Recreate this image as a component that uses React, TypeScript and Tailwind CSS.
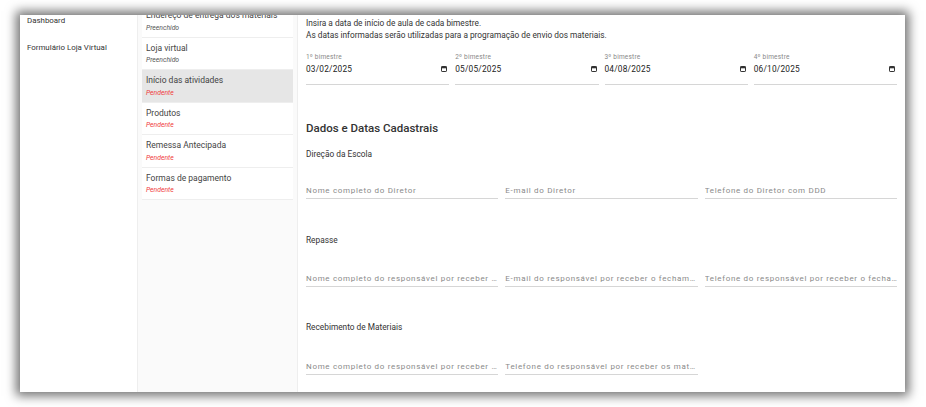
import React from "react";

const font = { fontFamily: "Roboto, 'Liberation Sans', sans-serif" };

function Cal() {
  return (
    <svg width="6" height="6" viewBox="0 0 6 6" className="shrink-0">
      <rect x="0.5" y="0.5" width="5" height="5" rx="0.6" fill="none" stroke="#333" strokeWidth="1" />
      <rect x="0.5" y="0.5" width="5" height="1.8" fill="#333" />
    </svg>
  );
}

const items = [
  { t: "Endereço de entrega dos materiais", s: "Preenchido" },
  { t: "Loja virtual", s: "Preenchido" },
  { t: "Início das atividades", s: "Pendente", sel: true },
  { t: "Produtos", s: "Pendente" },
  { t: "Remessa Antecipada", s: "Pendente" },
  { t: "Formas de pagamento", s: "Pendente" },
];

const dates = [
  ["1º bimestre", "03/02/2025"],
  ["2º bimestre", "05/05/2025"],
  ["3º bimestre", "04/08/2025"],
  ["4º bimestre", "06/10/2025"],
];

function Field({ p }: { p: string }) {
  return (
    <div className="border-b-[1.5px] border-[#d6d6d6] pb-[1px] min-w-0">
      <div className="text-[8px] leading-[12px] tracking-[0.68px] text-[#8a8a8a] truncate">{p}</div>
    </div>
  );
}

export default function App() {
  return (
    <div className="w-[926px] h-[407px] bg-white overflow-hidden pt-[15px] pl-[20px]" style={font}>
      <div className="w-[885px] h-[377px] bg-white flex overflow-hidden shadow-[0_0_10px_4px_rgba(0,0,0,0.55)]">
        {/* nav */}
        <div className="w-[117px] shrink-0 pl-[7px] text-[7.9px] leading-[12px] text-[#333]">
          <div>Dashboard</div>
          <div className="mt-[14.5px]">Formulário Loja Virtual</div>
        </div>
        {/* list */}
        <div className="w-[161px] shrink-0 bg-[#fafafa] border-l border-[#eeeeee] border-r px-[4px]">
          <div className="-mt-[10px] flex flex-col">
            {items.map((it) => (
              <div
                key={it.t}
                className={`h-[32.5px] border-b border-[#eeeeee] pl-[4px] pt-[4px] ${it.sel ? "bg-[#e6e6e6]" : "bg-white"}`}
              >
                <div className="text-[8.5px] leading-[12px] text-[#444] truncate">{it.t}</div>
                <div
                  className={`text-[6.8px] leading-[8px] italic mt-[2.5px] ${it.s === "Pendente" ? "text-[#f03c3c]" : "text-[#555]"}`}
                >
                  {it.s}
                </div>
              </div>
            ))}
          </div>
        </div>
        {/* main */}
        <div className="flex-1 min-w-0 pt-[2px] pl-[8px] pr-[8px] text-[#333]">
          <p className="text-[8.3px] leading-[12px]">
            Insira a data de início de aula de cada bimestre.
            <br />
            As datas informadas serão utilizadas para a programação de envio dos materiais.
          </p>
          <div className="mt-[11px] grid grid-cols-4 gap-x-[6px]">
            {dates.map(([l, v]) => (
              <div key={l} className="border-b-[1.5px] border-[#d6d6d6] pb-[9px]">
                <div className="text-[6.5px] leading-[10px] text-[#888] tracking-[0.2px]">{l}</div>
                <div className="mt-[1px] flex items-center justify-between pr-[2px]">
                  <span className="text-[8.3px] leading-[12px] text-[#222] tracking-[0.2px]">{v}</span>
                  <Cal />
                </div>
              </div>
            ))}
          </div>
          <div className="mt-[35px] text-[11.5px] leading-[16px] font-medium text-[#333]">Dados e Datas Cadastrais</div>
          <div className="mt-[12px] text-[8.3px] leading-[12px]">Direção da Escola</div>
          <div className="mt-[25px] grid grid-cols-3 gap-x-[7px]">
            <Field p="Nome completo do Diretor" />
            <Field p="E-mail do Diretor" />
            <Field p="Telefone do Diretor com DDD" />
          </div>
          <div className="mt-[35px] text-[8.3px] leading-[12px]">Repasse</div>
          <div className="mt-[27px] grid grid-cols-3 gap-x-[7px]">
            <Field p="Nome completo do responsável por receber o fechamento" />
            <Field p="E-mail do responsável por receber o fechamento" />
            <Field p="Telefone do responsável por receber o fechamento" />
          </div>
          <div className="mt-[34px] text-[8.3px] leading-[12px]">Recebimento de Materiais</div>
          <div className="mt-[28px] grid grid-cols-3 gap-x-[7px]">
            <Field p="Nome completo do responsável por receber os materiais" />
            <Field p="Telefone do responsável por receber os materiais" />
          </div>
        </div>
      </div>
    </div>
  );
}
